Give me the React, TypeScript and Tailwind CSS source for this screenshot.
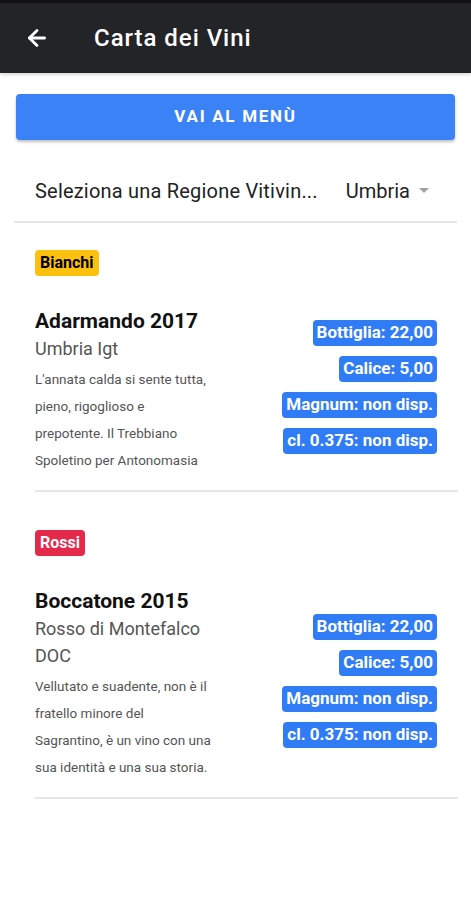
import { ArrowLeft } from "lucide-react";

type Wine = {
  name: string;
  origin: string[];
  description: string[];
  prices: string[];
};

const prices = ["Bottiglia: 22,00", "Calice: 5,00", "Magnum: non disp.", "cl. 0.375: non disp."];

const sections: { label: string; badge: string; wines: Wine[] }[] = [
  {
    label: "Bianchi",
    badge: "bg-[#fcc10f] text-black",
    wines: [
      {
        name: "Adarmando 2017",
        origin: ["Umbria Igt"],
        description: [
          "L'annata calda si sente tutta,",
          "pieno, rigoglioso e",
          "prepotente. Il Trebbiano",
          "Spoletino per Antonomasia",
        ],
        prices,
      },
    ],
  },
  {
    label: "Rossi",
    badge: "bg-[#e5294a] text-white",
    wines: [
      {
        name: "Boccatone 2015",
        origin: ["Rosso di Montefalco", "DOC"],
        description: [
          "Vellutato e suadente, non è il",
          "fratello minore del",
          "Sagrantino, è un vino con una",
          "sua identità e una sua storia.",
        ],
        prices,
      },
    ],
  },
];

function WineRow({ wine }: { wine: Wine }) {
  return (
    <div className="flex items-center mt-[32px] pb-[16px] border-b-2 border-[#e6e6e6]">
      <div className="w-[200px] shrink-0">
        <p className="text-[21px] leading-[27px] font-bold text-[#111]">{wine.name}</p>
        {wine.origin.map((o) => (
          <p key={o} className="text-[18px] leading-[27px] text-[#555]">
            {o}
          </p>
        ))}
        <div className="mt-1">
          {wine.description.map((d) => (
            <p key={d} className="text-[13.5px] leading-[27px] text-[#555] whitespace-nowrap">
              {d}
            </p>
          ))}
        </div>
      </div>
      <div className="flex-1 flex flex-col items-end gap-[10px] pr-[21px] -mt-[8px]">
        {wine.prices.map((p) => (
          <span
            key={p}
            className="h-[26px] flex items-center px-[4px] rounded-[4px] bg-[#2f7cf6] text-white text-[17px] font-bold"
          >
            {p}
          </span>
        ))}
      </div>
    </div>
  );
}

export default function App() {
  return (
    <div className="min-h-[900px] bg-white font-['Roboto','Liberation_Sans',sans-serif]">
      {/* Barra superiore */}
      <header className="h-[73px] bg-[#232427] border-t-[3px] border-[#111] flex items-center shadow-[0_2px_3px_rgba(0,0,0,0.15)]">
        <ArrowLeft className="ml-[24px] w-[26px] h-[26px] text-white" strokeWidth={2.6} />
        <h1 className="ml-[44px] text-[24px] font-medium tracking-[0.04em] text-white">Carta dei Vini</h1>
      </header>

      <div className="px-4 pt-[21px]">
        <button className="w-full h-[46px] rounded-[4px] bg-[#3c82f7] text-white text-[17px] font-bold tracking-[0.1em] shadow-[0_2px_3px_rgba(0,0,0,0.25)]">
          VAI AL MENÙ
        </button>
      </div>

      <div className="mx-[14px] mt-[20px] h-[63px] flex items-center pl-[21px] pr-[28px] border-b-2 border-[#e6e6e6]">
        <span className="flex-1 text-[20px] tracking-[0.01em] text-[#222]">Seleziona una Regione Vitivin...</span>
        <span className="text-[20px] text-[#222]">Umbria</span>
        <span className="ml-[9px] w-0 h-0 border-l-[5px] border-r-[5px] border-t-[5px] border-l-transparent border-r-transparent border-t-[#a0a0a0]" />
      </div>

      <div className="pl-[35px] pr-[13px]">
        {sections.map((s, i) => (
          <section key={s.label} className={i === 0 ? "pt-[27px]" : "pt-[38px]"}>
            <span className={`inline-flex h-[26px] items-center px-[5px] rounded-[4px] text-[16px] font-bold ${s.badge}`}>
              {s.label}
            </span>
            {s.wines.map((w) => (
              <WineRow key={w.name} wine={w} />
            ))}
          </section>
        ))}
      </div>
    </div>
  );
}
